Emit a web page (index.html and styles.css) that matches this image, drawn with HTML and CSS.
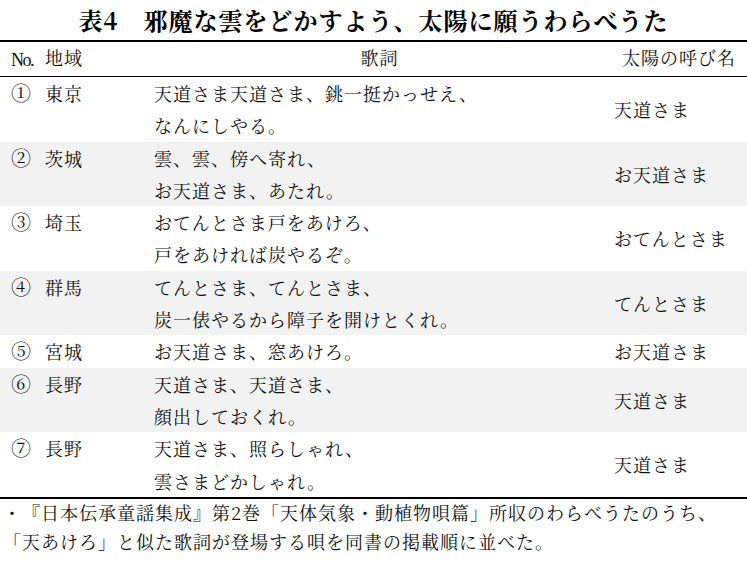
FILE: index.html
```html
<!DOCTYPE html>
<html lang="ja">
<head>
<meta charset="utf-8">
<link rel="stylesheet" href="styles.css">
</head>
<body>
<div class="page">
  <h1 class="title">表4　邪魔な雲をどかすよう、太陽に願うわらべうた</h1>
  <div class="table">
    <div class="row head">
      <div class="c-no"><span class="no">No.</span></div>
      <div class="c-area">地域</div>
      <div class="c-lyric center">歌詞</div>
      <div class="c-name">太陽の呼び名</div>
    </div>
    <div class="row">
      <div class="c-no">①</div>
      <div class="c-area">東京</div>
      <div class="c-lyric">天道さま天道さま、銚一挺かっせえ、<br>なんにしやる。</div>
      <div class="c-name mid">天道さま</div>
    </div>
    <div class="row alt">
      <div class="c-no">②</div>
      <div class="c-area">茨城</div>
      <div class="c-lyric">雲、雲、傍へ寄れ、<br>お天道さま、あたれ。</div>
      <div class="c-name mid">お天道さま</div>
    </div>
    <div class="row">
      <div class="c-no">③</div>
      <div class="c-area">埼玉</div>
      <div class="c-lyric">おてんとさま戸をあけろ、<br>戸をあければ炭やるぞ。</div>
      <div class="c-name mid">おてんとさま</div>
    </div>
    <div class="row alt">
      <div class="c-no">④</div>
      <div class="c-area">群馬</div>
      <div class="c-lyric">てんとさま、てんとさま、<br>炭一俵やるから障子を開けとくれ。</div>
      <div class="c-name mid">てんとさま</div>
    </div>
    <div class="row">
      <div class="c-no">⑤</div>
      <div class="c-area">宮城</div>
      <div class="c-lyric">お天道さま、窓あけろ。</div>
      <div class="c-name mid">お天道さま</div>
    </div>
    <div class="row alt">
      <div class="c-no">⑥</div>
      <div class="c-area">長野</div>
      <div class="c-lyric">天道さま、天道さま、<br>顔出しておくれ。</div>
      <div class="c-name mid">天道さま</div>
    </div>
    <div class="row last">
      <div class="c-no">⑦</div>
      <div class="c-area">長野</div>
      <div class="c-lyric">天道さま、照らしゃれ、<br>雲さまどかしゃれ。</div>
      <div class="c-name mid">天道さま</div>
    </div>
  </div>
  <p class="note">・『日本伝承童謡集成』第2巻「天体気象・動植物唄篇」所収のわらべうたのうち、<br>「天あけろ」と似た歌詞が登場する唄を同書の掲載順に並べた。</p>
</div>
</body>
</html>
```

FILE: styles.css
```css
html, body {
  margin: 0;
  padding: 0;
  background: #ffffff;
}

body {
  width: 747px;
  height: 563px;
  overflow: hidden;
  color: #111111;
  font-family: "Noto Serif CJK JP", "Noto Sans CJK JP", serif;
  font-size: 18px;
  text-spacing-trim: space-all;
}

.title {
  margin: 0;
  height: 40px;
  line-height: 40px;
  font-size: 24px;
  font-weight: bold;
  text-align: center;
  letter-spacing: 1px;
  color: #000000;
}

.table {
  border-top: 2px solid #000000;
  border-bottom: 2px solid #000000;
}

.row {
  display: grid;
  grid-template-columns: 45px 100px 469px 1fr;
  line-height: 32.3px;
  letter-spacing: 1px;
}

.row.alt {
  background: #f2f2f2;
}

.row.head {
  line-height: 31px;
  border-bottom: 1px solid #000000;
}

.c-no {
  padding-left: 11px;
  font-size: 20px;
}

.no {
  font-size: 18px;
  font-family: "Liberation Serif", serif;
  letter-spacing: -1.5px;
}

.c-lyric {
  padding-left: 9px;
}

.c-lyric.center {
  padding-left: 0;
  text-align: center;
}

.c-name {
  padding-left: 8px;
}

.c-name.mid {
  padding-left: 0;
  display: flex;
  align-items: center;
}

.note {
  margin: -1px 0 0 0;
  padding-left: 3px;
  line-height: 29px;
  letter-spacing: 1px;
  white-space: nowrap;
}
```
